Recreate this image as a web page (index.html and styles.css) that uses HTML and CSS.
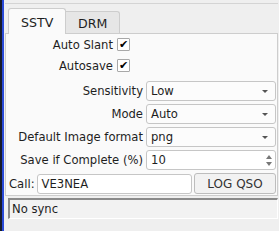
FILE: index.html
```html
<!DOCTYPE html>
<html>
<head>
  <title>SSTV</title>
  <link rel="stylesheet" href="styles.css">
</head>
<body>
  <div class="edge"></div>
  <div id="panel">
    <div id="tabs">
      <div class="tab active">SSTV</div>
      <div class="tab">DRM</div>
    </div>
    <div id="page">
      <div class="checkrow">
        <span>Auto Slant</span>
        <span class="check">&#10004;</span>
      </div>
      <div class="checkrow">
        <span>Autosave</span>
        <span class="check">&#10004;</span>
      </div>
      <div class="fields">
        <div class="row">
          <span class="label">Sensitivity</span>
          <div class="combo">Low<span class="arrow"></span></div>
        </div>
        <div class="row">
          <span class="label">Mode</span>
          <div class="combo">Auto<span class="arrow"></span></div>
        </div>
        <div class="row">
          <span class="label">Default Image format</span>
          <div class="combo">png<span class="arrow"></span></div>
        </div>
        <div class="row">
          <span class="label">Save if Complete (%)</span>
          <div class="spin">10
            <span class="spinbtns">
              <span class="up"></span>
              <span class="down"></span>
            </span>
          </div>
        </div>
        <div class="callrow">
          <span>Call:</span>
          <div class="input">VE3NEA</div>
          <button id="log">LOG QSO</button>
        </div>
      </div>
    </div>
    <div id="status">No sync</div>
  </div>
</body>
</html>
```

FILE: styles.css
```css
html, body {
  margin: 0;
  height: 100%;
}
body {
  display: flex;
  background-color: #efefef;
  font-family: "DejaVu Sans", sans-serif;
  font-size: 11.6px;
  color: #1e1e1e;
}
.edge {
  width: 2px;
  background-color: #151a2a;
  border-right: 2px solid #2a4ad8;
}
#panel {
  flex: 1;
  padding: 3px 1px 0 1px;
  display: flex;
  flex-direction: column;
}
#tabs {
  display: flex;
  align-items: flex-end;
  padding-left: 3px;
  border-top: 1px solid #d4d4d4;
  padding-top: 4px;
}
.tab {
  box-sizing: border-box;
  width: 54px;
  height: 22px;
  padding: 4px 0 0 12px;
  border: 1px solid #cdcdcd;
  border-bottom: none;
  border-left: none;
  border-radius: 0 3px 0 0;
  background-color: #e6e6e6;
  font-size: 12.6px;
}
.tab.active {
  width: 58px;
  height: 26px;
  padding-top: 6px;
  margin-bottom: -1px;
  border-left: 1px solid #cdcdcd;
  border-radius: 3px 3px 0 0;
  background-color: #fafafa;
  position: relative;
  z-index: 1;
}
#page {
  border: 1px solid #cdcdcd;
  background-color: #fafafa;
  padding: 0 1px 1px 2px;
  display: flex;
  flex-direction: column;
}
.checkrow {
  width: 122px;
  height: 21px;
  display: flex;
  justify-content: flex-end;
  align-items: center;
  gap: 4px;
}
.check {
  box-sizing: border-box;
  width: 13px;
  height: 13px;
  border: 1px solid #a8a8a8;
  background-color: #fff;
  border-radius: 1px;
  font-size: 11px;
  line-height: 11px;
  text-align: center;
  color: #000;
}
.fields {
  margin-top: 5px;
  display: flex;
  flex-direction: column;
  gap: 3px;
}
.row {
  display: grid;
  grid-template-columns: 135px 1fr;
  column-gap: 3px;
  align-items: center;
}
.label {
  text-align: right;
}
.combo, .spin, .input {
  position: relative;
  box-sizing: border-box;
  height: 20px;
  line-height: 18px;
  border: 1px solid #c6c6c6;
  border-radius: 3px;
  background-color: #fcfcfc;
  padding-left: 4px;
}
.arrow {
  position: absolute;
  right: 7px;
  top: 8px;
  border-left: 3px solid transparent;
  border-right: 3px solid transparent;
  border-top: 3px solid #555;
}
.spin {
  background-color: #fff;
}
.spinbtns {
  position: absolute;
  right: 0;
  top: 0;
  bottom: 0;
  width: 12px;
  display: flex;
  flex-direction: column;
  align-items: center;
  justify-content: center;
  gap: 3px;
}
.up {
  border-left: 3px solid transparent;
  border-right: 3px solid transparent;
  border-bottom: 4px solid #777;
}
.down {
  border-left: 3px solid transparent;
  border-right: 3px solid transparent;
  border-top: 4px solid #777;
}
.callrow {
  display: flex;
  align-items: center;
  gap: 2px;
  padding-left: 1px;
}
.input {
  flex: 1;
  background-color: #fff;
}
#log {
  width: 82px;
  height: 21px;
  font-family: "DejaVu Sans", sans-serif;
  font-size: 12px;
  color: #333;
  background-color: #f2f2f2;
  border: 1px solid #bdbdbd;
  border-radius: 3px;
  padding: 0;
}
#status {
  margin-top: 2px;
  margin-left: 3px;
  box-sizing: border-box;
  height: 21px;
  border-top: 2px solid #8a8a8a;
  border-left: 2px solid #8a8a8a;
  border-bottom: 1px solid #fff;
  border-right: 1px solid #fff;
  line-height: 18px;
  padding-left: 2px;
  background-color: #f2f2f2;
}
```
